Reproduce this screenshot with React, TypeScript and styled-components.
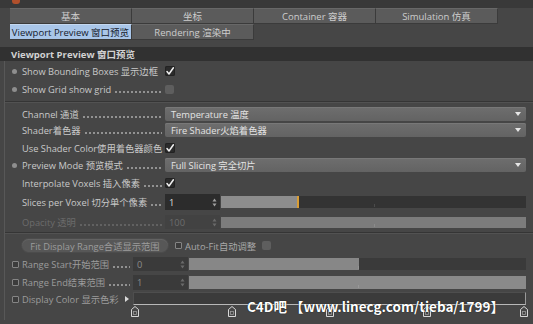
import React from 'react'
import styled, { createGlobalStyle } from 'styled-components'

const GlobalStyle = createGlobalStyle`
    html, body {
        margin: 0;
        background: #464646;
    }
`

export default function App() {
    return (
        <Window>
            <GlobalStyle />
            <TopStrip>
                <AppIcon />
            </TopStrip>
            <TabGrid>
                <Tab>基本</Tab>
                <Tab>坐标</Tab>
                <Tab>Container 容器</Tab>
                <Tab>Simulation 仿真</Tab>
                <Tab $active>Viewport Preview 窗口预览</Tab>
                <Tab>Rendering 渲染中</Tab>
            </TabGrid>
            <Header>Viewport Preview 窗口预览</Header>
            <Body>
                <Row $h={18} $mt={0}>
                    <BulletSlot><Dot /></BulletSlot>
                    <Label $w={140} $auto>Show Bounding Boxes 显示边框</Label>
                    <Check checked />
                </Row>
                <Row $h={18} $mt={0}>
                    <BulletSlot><Dot /></BulletSlot>
                    <Label $w={140}>Show Grid show grid<Leader /></Label>
                    <Check />
                </Row>
                <Separator $mt={3} />
                <Row $h={16} $mt={3}>
                    <BulletSlot />
                    <Label $w={140}>Channel 通道<Leader /></Label>
                    <Dropdown>Temperature 温度<Caret /></Dropdown>
                </Row>
                <Row $h={16} $mt={0}>
                    <BulletSlot />
                    <Label $w={140}>Shader着色器<Leader /></Label>
                    <Dropdown>Fire Shader火焰着色器<Caret /></Dropdown>
                </Row>
                <Row $h={18} $mt={1}>
                    <BulletSlot />
                    <Label $w={140} $auto>Use Shader Color使用着色器颜色</Label>
                    <Check checked />
                </Row>
                <Row $h={16} $mt={0}>
                    <BulletSlot><Dot /></BulletSlot>
                    <Label $w={140}>Preview Mode 预览模式<Leader /></Label>
                    <Dropdown>Full Slicing 完全切片<Caret /></Dropdown>
                </Row>
                <Row $h={18} $mt={1}>
                    <BulletSlot />
                    <Label $w={140}>Interpolate Voxels 插入像素<Leader /></Label>
                    <Check checked />
                </Row>
                <Row $h={18} $mt={1}>
                    <BulletSlot />
                    <Label $w={140}>Slices per Voxel 切分单个像素<Leader /></Label>
                    <NumberField $h={16} $bg="#2c2c2c" $color="#dedede">1<Stepper /></NumberField>
                    <Slider $h={12} $track="#333333">
                        <Fill $bg="#8d8d8d" $marker style={{ width: '25.5%' }} />
                    </Slider>
                </Row>
                <Row $h={18} $mt={2}>
                    <BulletSlot />
                    <Label $w={140} $dim>Opacity 透明<Leader $dim /></Label>
                    <NumberField $h={14} $bg="#424242" $color="#6c6c6c">100<Stepper $dim /></NumberField>
                    <Slider $h={11} $track="#7c7c7c" />
                </Row>
                <Separator $mt={1} />
                <Row $h={17} $mt={3}>
                    <BulletSlot />
                    <FitButton>Fit Display Range合适显示范围</FitButton>
                    <KeyIcon $ml={7} />
                    <AutoLabel>Auto-Fit自动调整</AutoLabel>
                    <Check />
                </Row>
                <Row $h={18} $mt={1}>
                    <BulletSlot><KeyIcon /></BulletSlot>
                    <Label $w={108} $mid>Range Start开始范围<Leader /></Label>
                    <NumberField $h={14} $bg="#3a3a3a" $color="#8a8a8a">0<Stepper $dim /></NumberField>
                    <Slider $h={12} $track="#3a3a3a">
                        <Fill $bg="#878787" style={{ width: '50.3%' }} />
                    </Slider>
                </Row>
                <Row $h={18} $mt={0}>
                    <BulletSlot><KeyIcon /></BulletSlot>
                    <Label $w={108} $mid>Range End结束范围<Leader /></Label>
                    <NumberField $h={15} $bg="#3a3a3a" $color="#8a8a8a">1<Stepper $dim /></NumberField>
                    <Slider $h={13} $track="#8a8a8a" />
                </Row>
                <Row $h={28} $mt={0} $top>
                    <BulletSlot $h={14}><KeyIcon /></BulletSlot>
                    <Label $w={108} $mid $h={14}>Display Color 显示色彩<Spacer /><Expand /></Label>
                    <ColorColumn>
                        <ColorBar />
                        <KnotTrack>
                            {[0, 25, 50, 75, 100].map(p => (
                                <Knot key={p} style={{ left: `${p}%` }} width="8" height="11" viewBox="0 0 8 11">
                                    <path d="M0.5 3.5 L4 0.5 L7.5 3.5 L7.5 10.5 L0.5 10.5 Z" fill="#474747" stroke="#d8d8d8" strokeWidth="1" />
                                    <rect x="2.5" y="5.5" width="3" height="3" fill="none" stroke="#9a9a9a" strokeWidth="0.8" />
                                </Knot>
                            ))}
                        </KnotTrack>
                    </ColorColumn>
                </Row>
            </Body>
            <Watermark>C4D吧 【www.linecg.com/tieba/1799】</Watermark>
        </Window>
    )
}

function Check({ checked }: { checked?: boolean }) {
    if (!checked) return <EmptyBox />
    return (
        <CheckBox>
            <svg width="10" height="10" viewBox="0 0 10 10">
                <path d="M2 5.6 L4 8 L8.4 1.8" fill="none" stroke="#f0f0f0" strokeWidth="1.5" strokeLinecap="round" strokeLinejoin="round" />
            </svg>
        </CheckBox>
    )
}

function Stepper({ $dim }: { $dim?: boolean }) {
    const c = $dim ? '#6a6a6a' : '#a0a0a0'
    return (
        <svg width="5" height="9" viewBox="0 0 5 9">
            <path d="M2.5 0.5 L4.5 3.5 L0.5 3.5 Z" fill={c} />
            <path d="M2.5 8.5 L4.5 5.5 L0.5 5.5 Z" fill={c} />
        </svg>
    )
}

const Window = styled.div`
    position: relative;
    width: 533px;
    height: 324px;
    overflow: hidden;
    background: #464646;
    font-family: 'Open Sans', 'Noto Sans CJK SC', sans-serif;
    font-size: 9.3px;
    color: #c9c9c9;
`

const TopStrip = styled.div`
    height: 8px;
    background: #393939;
    padding-left: 12px;
`

const AppIcon = styled.div`
    width: 8px;
    height: 4px;
    background: #b0502c;
    border-radius: 0 0 3px 3px;
`

const TabGrid = styled.div`
    display: grid;
    grid-template-columns: repeat(4, 122px);
    grid-auto-rows: 16px;
    margin-left: 10px;
`

const Tab = styled.div<{ $active?: boolean }>`
    display: flex;
    align-items: center;
    justify-content: center;
    white-space: nowrap;
    font-size: 9.5px;
    background: ${p => (p.$active ? '#a9c6e9' : '#5b5b5b')};
    color: ${p => (p.$active ? '#16202c' : '#cdcdcd')};
    border-top: 1px solid ${p => (p.$active ? '#c4d8f0' : '#686868')};
    border-right: 1px solid #3b3b3b;
    border-bottom: 1px solid #3b3b3b;
`

const Header = styled.div`
    margin-top: 7px;
    height: 14px;
    display: flex;
    align-items: center;
    padding-left: 11px;
    background: #313131;
    color: #d2d2d2;
    font-weight: 700;
    font-size: 9.5px;
`

const Body = styled.div`
    margin-left: 4px;
    border-left: 1px solid #585858;
    padding: 1px 7px 0 0;
`

const Separator = styled.div<{ $mt: number }>`
    margin-top: ${p => p.$mt}px;
    margin-right: -7px;
    height: 0;
    border-top: 1px solid #353535;
    border-bottom: 1px solid #525252;
`

const Row = styled.div<{ $h: number; $mt: number; $top?: boolean }>`
    display: flex;
    align-items: ${p => (p.$top ? 'flex-start' : 'center')};
    height: ${p => p.$h}px;
    margin-top: ${p => p.$mt}px;
    padding-left: 7px;
    padding-top: ${p => (p.$top ? 1 : 0)}px;
`

const BulletSlot = styled.div<{ $h?: number }>`
    width: 10px;
    flex: none;
    display: flex;
    align-items: center;
    height: ${p => (p.$h ? `${p.$h}px` : 'auto')};
`

const Dot = styled.div`
    width: 5px;
    height: 5px;
    border-radius: 50%;
    background: #8e8e8e;
`

const KeyIcon = styled.div<{ $ml?: number }>`
    width: 5px;
    height: 5px;
    flex: none;
    margin-left: ${p => p.$ml || 0}px;
    border: 1px solid #858585;
    border-radius: 1px;
    background: #3c3c3c;
`

const Label = styled.div<{ $w: number; $dim?: boolean; $mid?: boolean; $h?: number; $auto?: boolean }>`
    width: ${p => (p.$auto ? 'auto' : `${p.$w}px`)};
    min-width: ${p => p.$w}px;
    flex: none;
    display: flex;
    align-items: center;
    height: ${p => (p.$h ? `${p.$h}px` : 'auto')};
    margin-right: 3px;
    white-space: nowrap;
    overflow: ${p => (p.$auto ? 'visible' : 'hidden')};
    color: ${p => (p.$dim ? '#6c6c6c' : p.$mid ? '#9c9c9c' : '#c9c9c9')};
`

const Leader = styled.span<{ $dim?: boolean }>`
    flex: 1;
    min-width: 0;
    height: 8px;
    margin-left: 2px;
    background-image: radial-gradient(circle, ${p => (p.$dim ? '#666' : '#a0a0a0')} 0.65px, transparent 1px);
    background-size: 4px 2px;
    background-repeat: repeat-x;
    background-position: 1px 100%;
`

const Spacer = styled.span`
    flex: 1;
`

const Expand = styled.span`
    width: 0;
    height: 0;
    margin-right: 1px;
    border-left: 4px solid #d8d8d8;
    border-top: 3px solid transparent;
    border-bottom: 3px solid transparent;
`

const CheckBox = styled.div`
    width: 10px;
    height: 10px;
    flex: none;
    border-radius: 2px;
    background: #2b2b2b;
    box-shadow: inset 0 0 0 1px #222;
    svg {
        display: block;
    }
`

const EmptyBox = styled.div`
    width: 9px;
    height: 9px;
    flex: none;
    border-radius: 2px;
    background: #5e5e5e;
`

const Dropdown = styled.div`
    flex: 1;
    height: 14px;
    display: flex;
    align-items: center;
    justify-content: space-between;
    padding: 0 5px 0 6px;
    border-radius: 2px;
    background: linear-gradient(#6e6e6e, #636363);
    box-shadow: inset 0 1px 0 #787878;
    color: #e4e4e4;
    white-space: nowrap;
`

const Caret = styled.span`
    width: 0;
    height: 0;
    border-left: 3.5px solid transparent;
    border-right: 3.5px solid transparent;
    border-top: 4px solid #e6e6e6;
`

const NumberField = styled.div<{ $h: number; $bg: string; $color: string }>`
    width: 55px;
    height: ${p => p.$h}px;
    flex: none;
    display: flex;
    align-items: center;
    justify-content: space-between;
    padding: 0 3px 0 4px;
    box-sizing: border-box;
    margin-right: 1px;
    background: ${p => p.$bg};
    color: ${p => p.$color};
    svg {
        display: block;
    }
`

const Slider = styled.div<{ $h: number; $track: string }>`
    position: relative;
    flex: 1;
    height: ${p => p.$h}px;
    display: flex;
    background: ${p => p.$track};
    &::after {
        content: '';
        position: absolute;
        left: 50%;
        bottom: 1px;
        width: 1px;
        height: 3px;
        background: rgba(255, 255, 255, 0.12);
    }
`

const Fill = styled.div<{ $bg: string; $marker?: boolean }>`
    height: 100%;
    box-sizing: border-box;
    background: ${p => p.$bg};
    border-right: ${p => (p.$marker ? '2px solid #d99d34' : '0')};
`

const FitButton = styled.div`
    width: 146px;
    height: 13px;
    flex: none;
    display: flex;
    align-items: center;
    justify-content: center;
    border-radius: 7px;
    background: #575757;
    box-shadow: inset 0 1px 0 #626262, 0 0 0 1px #4c4c4c;
    color: #9c9c9c;
    white-space: nowrap;
`

const AutoLabel = styled.span`
    margin: 0 6px 0 3px;
    color: #a8a8a8;
    white-space: nowrap;
`

const ColorColumn = styled.div`
    flex: 1;
    display: flex;
    flex-direction: column;
`

const ColorBar = styled.div`
    height: 13px;
    box-sizing: border-box;
    background: #3b3b3b;
    border: 1px solid #4e4e4e;
    border-bottom-color: #b8b8b8;
    border-right-color: #9a9a9a;
`

const KnotTrack = styled.div`
    position: relative;
    height: 12px;
    margin: 0 2px;
`

const Knot = styled.svg`
    position: absolute;
    top: 1px;
    transform: translateX(-50%);
`

const Watermark = styled.div`
    position: absolute;
    left: 247px;
    top: 297px;
    font-family: 'Noto Sans CJK SC', sans-serif;
    font-weight: 700;
    font-size: 13.5px;
    line-height: 18px;
    color: #ffffff;
    white-space: nowrap;
    text-shadow: 0 0 1px #000;
`
